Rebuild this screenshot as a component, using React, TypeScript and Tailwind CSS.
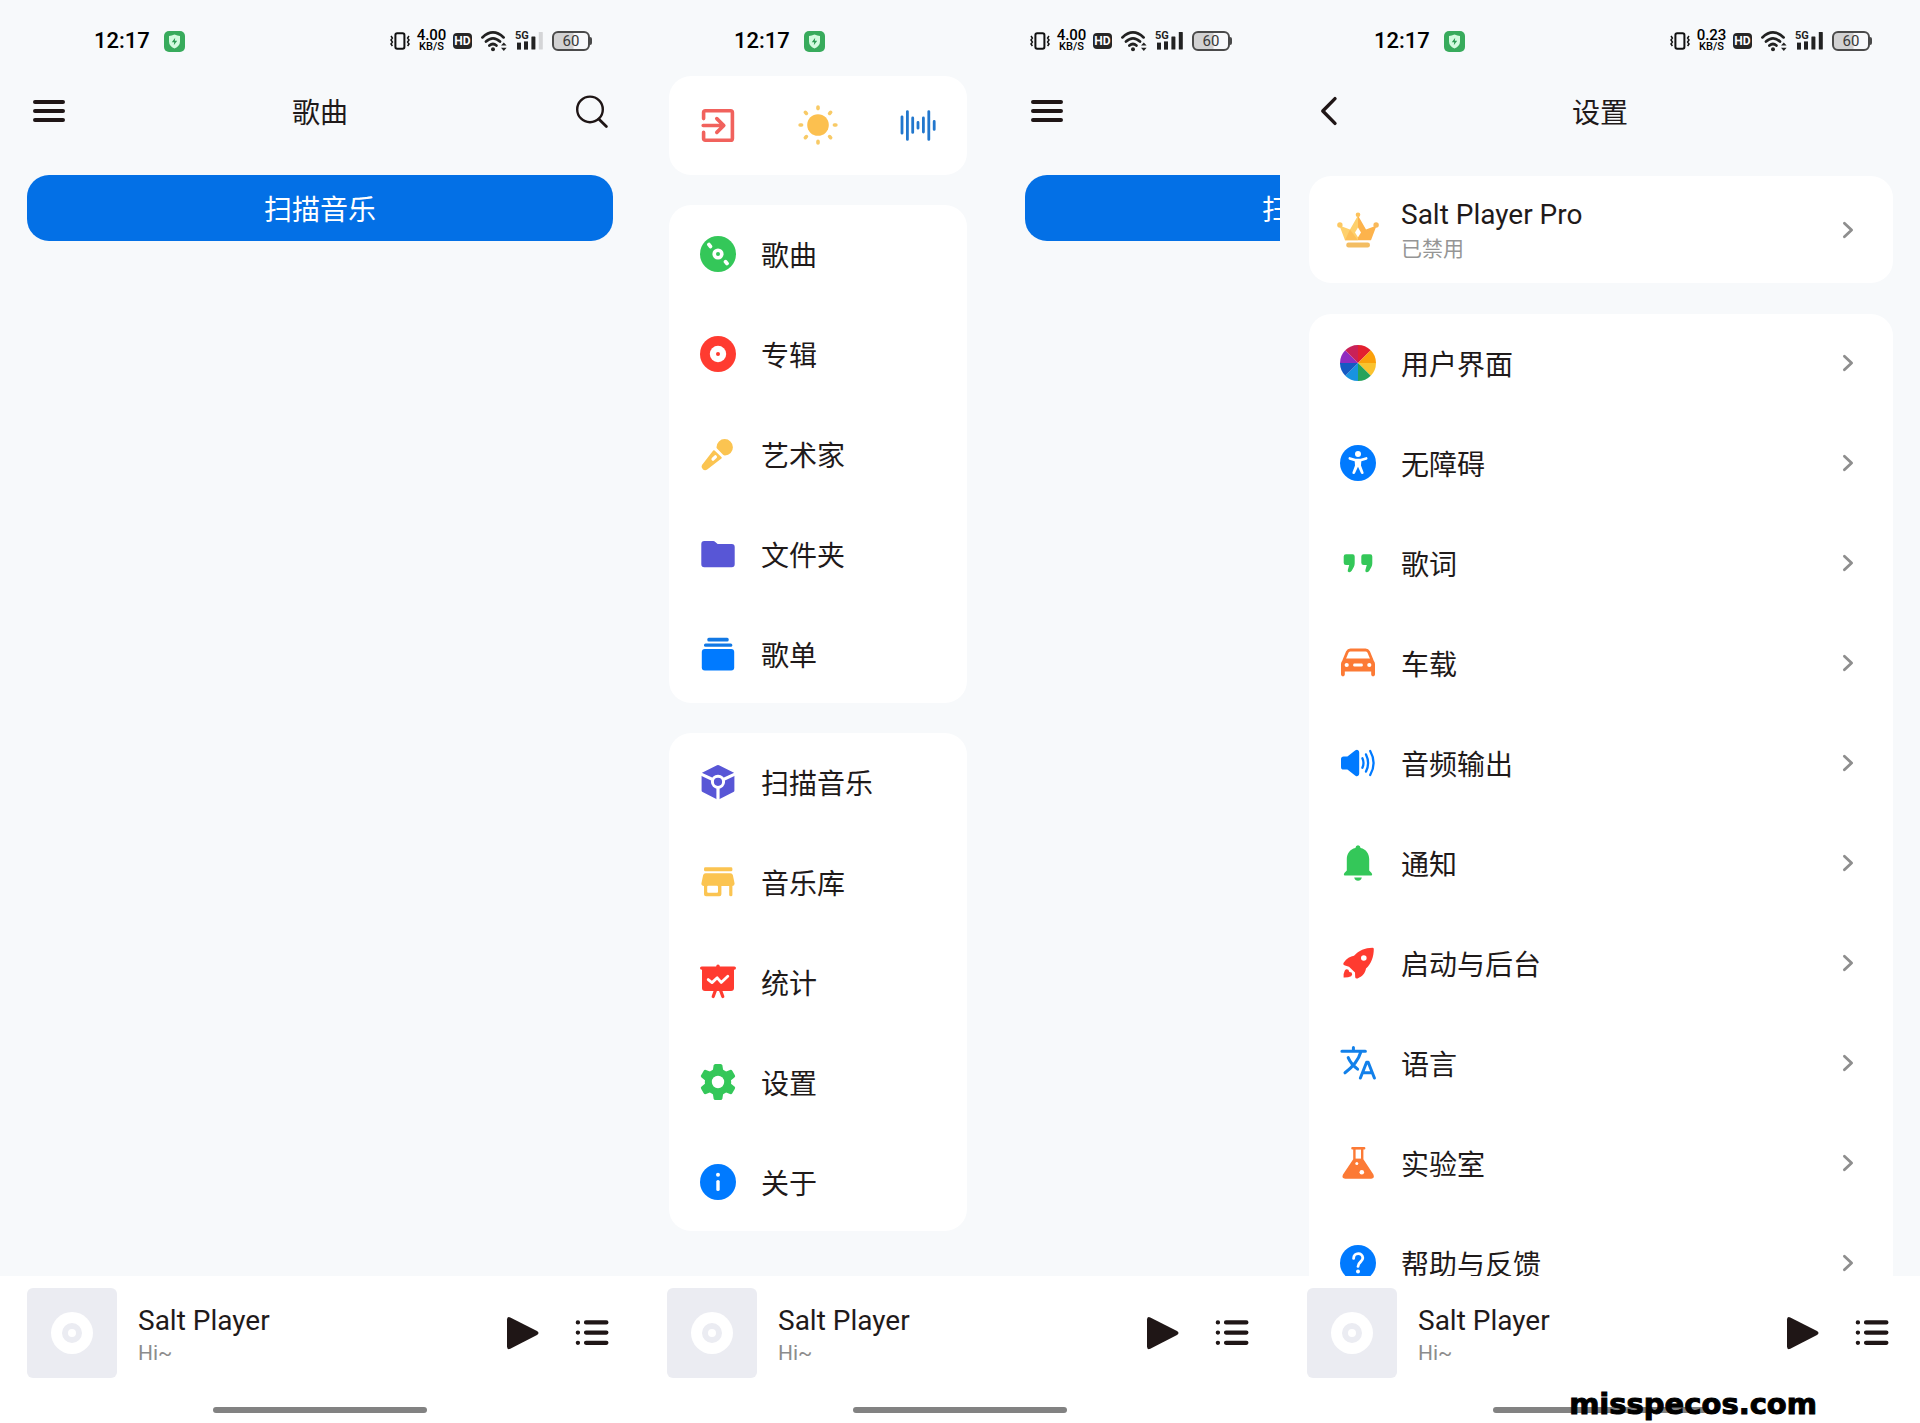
import type { ReactNode } from 'react'

const GREEN = '#34c759'
const RED = '#ff3b30'
const YELLOW = '#fbc451'
const PURPLE = '#5856d6'
const BLUE = '#007aff'
const ORANGE = '#fc7a35'
const INK = '#1f1616'

interface IconProps {
  children: ReactNode
}

function Icon({ children }: IconProps) {
  return (
    <svg viewBox="0 0 36 36" className="w-9 h-9 shrink-0" fill="none" strokeLinecap="round" strokeLinejoin="round" aria-hidden="true">
      {children}
    </svg>
  )
}

const SongIcon = () => (
  <Icon>
    <circle cx="18" cy="18" r="18" fill={GREEN} />
    <circle cx="18" cy="18" r="5.6" fill="#fff" />
    <circle cx="18" cy="18" r="2" fill={GREEN} />
    <path d="M9 8.6 10.4 10.4M25.6 25.8 27 27.4" stroke="#fff" strokeWidth="3.8" />
  </Icon>
)

const AlbumIcon = () => (
  <Icon>
    <circle cx="18" cy="18" r="18" fill={RED} />
    <circle cx="18" cy="18" r="8.2" fill="#fff" />
    <circle cx="18" cy="18" r="2" fill={RED} />
  </Icon>
)

const ArtistIcon = () => (
  <Icon>
    <path d="M16.5 11.2A8.2 8.2 0 1 1 25 19.5Q23.8 19.4 23.1 18.7L17.2 12.8Q16.4 12 16.5 11.2Z" fill={YELLOW} />
    <path d="M14.6 14.4 21.6 21.2Q22.2 22 21.4 22.6L7.2 33.6Q4.8 35.2 2.8 33.3 .6 31.2 2 29L13.2 14.6Q13.8 13.9 14.6 14.4Z" fill={YELLOW} />
    <path d="M13 23.2 15.4 20.8" stroke="#fff" strokeWidth="3.2" />
  </Icon>
)

const FolderIcon = () => (
  <Icon>
    <path d="M4.3 5H13.2Q14.4 5 15.3 5.9L17.6 8H31.7Q34.7 8 34.7 11V28.3Q34.7 31.3 31.7 31.3H4.3Q1.3 31.3 1.3 28.3V8Q1.3 5 4.3 5Z" fill={PURPLE} />
  </Icon>
)

const PlaylistIcon = () => (
  <Icon>
    <rect x="7.3" y="1.7" width="21.4" height="3.8" rx="1.5" fill="#1278e4" />
    <rect x="4" y="7.5" width="28.3" height="3.3" rx="1.5" fill="#1278e4" />
    <rect x="1.8" y="13" width="32.4" height="21.4" rx="3" fill={BLUE} />
  </Icon>
)

const ScanIcon = () => (
  <Icon>
    <path d="M17 1.3Q18 .8 19 1.3L33.5 8.6Q34.4 9.1 34.4 10V26.4Q34.4 27.6 33.4 28.1L19.2 35.2Q18 35.7 16.8 35.2L2.6 28.1Q1.6 27.6 1.6 26.4V10Q1.6 9.1 2.5 8.6Z" fill={PURPLE} />
    <path d="M0 9.6 18 18 36 9.6M18 18V37" stroke="#fff" strokeWidth="3.2" />
    <circle cx="18" cy="17.8" r="5.6" fill={PURPLE} stroke="#fff" strokeWidth="3" />
  </Icon>
)

const LibraryIcon = () => (
  <Icon>
    <rect x="4" y="3.3" width="28.4" height="4" rx="1.4" fill={YELLOW} />
    <path d="M5.6 9.3H30.4Q32.4 9.3 32.9 11.2L34.6 19.6Q34.7 21.8 32.4 22V30.9Q32.4 32.3 30.9 32.3 29.2 32.3 29.2 30.9V22H21.4V30.3Q21.4 32.3 19.4 32.3H6Q4 32.3 4 30.3V22Q1.3 21.8 1.4 19.6L3.1 11.2Q3.6 9.3 5.6 9.3Z" fill={YELLOW} />
    <rect x="7.2" y="21.8" width="10.8" height="7" rx="1" fill="#fff" />
  </Icon>
)

const StatsIcon = () => (
  <Icon>
    <rect x="0" y="2.4" width="36" height="3.4" rx="1.7" fill={RED} />
    <circle cx="18" cy="2.4" r="1.8" fill={RED} />
    <path d="M2 4H34V24Q34 27 31 27H5Q2 27 2 24Z" fill={RED} />
    <path d="M15.4 26.5 13.2 32.5M20.6 26.5 22.8 32.5" stroke={RED} strokeWidth="3.2" />
    <path d="M8.2 15.6 12 18.6 17.2 13.8 21.2 18.4 27.8 12.2" stroke="#fff" strokeWidth="2.8" />
  </Icon>
)

const TOOTH = 'M13.6 1.6Q13.9 0 15.4 0H20.6Q22.1 0 22.4 1.6L23.6 9H12.4Z'

const GearIcon = () => (
  <Icon>
    <circle cx="18" cy="18" r="13.2" fill={GREEN} />
    {[0, 60, 120, 180, 240, 300].map((deg) => (
      <path key={deg} d={TOOTH} fill={GREEN} transform={`rotate(${deg} 18 18)`} />
    ))}
    <circle cx="18" cy="18" r="6.2" fill="#fff" />
  </Icon>
)

const AboutIcon = () => (
  <Icon>
    <circle cx="18" cy="18" r="18" fill={BLUE} />
    <circle cx="18" cy="10.8" r="2" fill="#fff" />
    <path d="M18 17.6V25.4" stroke="#fff" strokeWidth="3.4" />
  </Icon>
)

const SLICES = ['#e3202f', '#fba00a', '#fac32f', '#27a35b', '#1893e0', '#1559c2', '#8f2cc0', '#c92158']

const PaletteIcon = () => (
  <Icon>
    {SLICES.map((color, i) => (
      <path key={color} d="M18 18V0A18 18 0 0 1 30.73 5.27Z" fill={color} transform={`rotate(${i * 45} 18 18)`} />
    ))}
  </Icon>
)

const AccessIcon = () => (
  <Icon>
    <circle cx="18" cy="18" r="18" fill={BLUE} />
    <circle cx="18" cy="9" r="3" fill="#fff" />
    <path d="M9.8 13.4 15 15H21L26.2 13.4" stroke="#fff" strokeWidth="2.6" />
    <path d="M14.6 14.6H21.4L21 20.6 23.6 27.4Q23.7 28.9 22.4 28.9 21.3 29 20.9 28L18 21.8 15.1 28Q14.7 29 13.6 28.9 12.3 28.9 12.4 27.4L15 20.6Z" fill="#fff" />
  </Icon>
)

const QUOTE = 'M6 9.3H12.6Q14.7 9.3 14.7 11.4V18.2Q14.7 20.2 13.8 22L11.7 25.8Q10.8 27.4 9 27.2 7.2 26.8 7.8 25L9.2 20H6Q3.7 20 3.7 17.8V11.6Q3.7 9.3 6 9.3Z'

const LyricsIcon = () => (
  <Icon>
    <path d={QUOTE} fill={GREEN} />
    <path d={QUOTE} fill={GREEN} transform="translate(17.6 0)" />
  </Icon>
)

const CarIcon = () => (
  <Icon>
    <path d="M4 15 7.4 6.8Q8.3 5 10.4 5H25.6Q27.7 5 28.6 6.8L32 15" stroke={ORANGE} strokeWidth="2.8" />
    <path d="M4.4 13.4H31.6L33.6 15.6Q35 17.2 35 19V29.6Q35 31.4 33 31.4 31.2 31.4 31.2 29.6V26.6H4.8V29.6Q4.8 31.4 3 31.4 1 31.4 1 29.6V19Q1 17.2 2.4 15.6Z" fill={ORANGE} />
    <circle cx="6.7" cy="20" r="2.1" fill="#fff" />
    <circle cx="29.3" cy="20" r="2.1" fill="#fff" />
    <rect x="13.2" y="18.6" width="9.6" height="2.8" rx="1.2" fill="#fff" />
  </Icon>
)

const AudioIcon = () => (
  <Icon>
    <path d="M3.6 11.4H7.4L15.4 5.3Q17 4.2 18.2 5.2 19.2 6 19.2 7.4V28.6Q19.2 30 18.2 30.8 17 31.8 15.4 30.7L7.4 24.6H3.6Q1 24.6 1 22V14Q1 11.4 3.6 11.4Z" fill={BLUE} />
    <path d="M22.4 13.2Q24.6 18 22.4 22.8M26 9.4Q30.2 18 26 26.6M30.2 6Q37 18 30.2 30" stroke={BLUE} strokeWidth="2.3" />
  </Icon>
)

const BellIcon = () => (
  <Icon>
    <path d="M18 .3Q20.2 .3 20.6 2.9C26 4.2 29.2 8.4 29.2 14V25.4L31.6 27.9Q32.8 29.4 31.6 30.6H4.4Q3.2 29.4 4.4 27.9L6.8 25.4V14C6.8 8.4 10 4.2 15.4 2.9Q15.8 .3 18 .3Z" fill={GREEN} />
    <path d="M14.2 32.6H21.8Q21 35.8 18 35.8 15 35.8 14.2 32.6Z" fill={GREEN} />
  </Icon>
)

const RocketIcon = () => (
  <Icon>
    <path d="M33.8 4Q33.8 2.7 32.4 2.7C25 2.8 18.8 5.3 14 10.8 10.4 11.2 6.6 13.6 3.8 17.6 2.8 19.2 3.4 20 5 20.6L9 21.8 15 27.4 15.2 32.2Q15.6 34 17.6 33.4C22.4 31.8 25.2 28.4 26 23.6 31.4 18.6 33.8 11.6 33.8 4Z" fill={RED} />
    <circle cx="23.8" cy="13" r="2.8" fill="#fff" />
    <path d="M4.8 25.4Q6.4 23.2 8.4 24.8L9.4 27 11.6 27.6Q13 29.6 11.2 31.2 8 32.8 3.6 32.6 3.2 28.4 4.8 25.4Z" fill={RED} />
  </Icon>
)

const LanguageIcon = () => (
  <Icon>
    <path d="M1.9 6.3H25.4M13.4 2.6V6M20.8 7C18.6 14.6 12.6 22 5 27.8M8.2 12.6C10 17 13.6 21 17.6 24.2" stroke="#1280ea" strokeWidth="3" />
    <path d="M20.4 33 26.6 17.2H28.2L34.4 33M22.4 27.8H32.4" stroke="#1280ea" strokeWidth="3" />
  </Icon>
)

const LabIcon = () => (
  <Icon>
    <path d="M12.4 2H24.2Q25.4 2 25.4 3.2 25.4 4.4 24.2 4.4H23.4V14.2L33.4 29.6Q35 33.6 31.2 33.8H5.2Q1.2 33.6 3 29.6L13.2 14.2V4.4H12.4Q11.2 4.4 11.2 3.2 11.2 2 12.4 2Z" fill={ORANGE} />
    <rect x="15.6" y="4.6" width="5.4" height="9" fill="#fff" />
    <circle cx="16.8" cy="18.4" r="1.5" fill="#fff" />
    <circle cx="21.8" cy="27.2" r="2.3" fill="#fff" />
  </Icon>
)

const HelpIcon = () => (
  <Icon>
    <circle cx="18" cy="18" r="18" fill={BLUE} />
    <path d="M13.6 13.4C13.6 7.2 22.8 7.2 22.8 13 22.8 16.8 18 17 18 21.4" stroke="#fff" strokeWidth="2.8" />
    <circle cx="18" cy="26.6" r="2" fill="#fff" />
  </Icon>
)

const ExitIcon = () => (
  <Icon>
    <path d="M3.6 11.6V5.6Q3.6 3.8 5.4 3.8H30.6Q32.4 3.8 32.4 5.6V31.4Q32.4 33.2 30.6 33.2H5.4Q3.6 33.2 3.6 31.4V25.4" stroke="#f1625d" strokeWidth="3.6" />
    <path d="M3.2 18.5H23.6M16.8 11.6 23.8 18.5 16.8 25.4" stroke="#f1625d" strokeWidth="3.6" />
  </Icon>
)

const SunIcon = () => (
  <svg viewBox="-20 -20 40 40" className="w-10 h-10" strokeLinecap="round" aria-hidden="true">
    <circle r="10.8" fill="#fcc04f" />
    {[0, 45, 90, 135, 180, 225, 270, 315].map((deg) => (
      <path key={deg} d="M0 -17.9V-16.4" stroke="#f8ca66" strokeWidth="3.6" transform={`rotate(${deg})`} />
    ))}
  </svg>
)

const WaveIcon = () => (
  <Icon>
    <path
      d="M2 9.8V26.2M7.4 4.6V32.4M12.7 11V25.4M18 15.4V21.2M23.4 11V25M28.8 4.6V32.4M34.2 14.4V22.4"
      stroke="#2277cd"
      strokeWidth="2.8"
    />
  </Icon>
)

const MenuIcon = () => (
  <Icon>
    <path d="M4 9H32M4 18H32M4 27H32" stroke={INK} strokeWidth="4" />
  </Icon>
)

const SearchIcon = () => (
  <Icon>
    <circle cx="17" cy="16.4" r="12.8" stroke={INK} strokeWidth="2.4" />
    <path d="M26 26.2 33.4 33.6" stroke={INK} strokeWidth="2.8" />
  </Icon>
)

const BackIcon = () => (
  <Icon>
    <path d="M24 5.6 11.8 18 24 30.4" stroke={INK} strokeWidth="3.4" />
  </Icon>
)

const PlayIcon = () => (
  <Icon>
    <path d="M3 4.6Q3 .9 6.3 2.4L33 16Q36 18 33 20L6.3 33.8Q3 35.2 3 31.6Z" fill={INK} />
  </Icon>
)

const QueueIcon = () => (
  <Icon>
    <path d="M12 7.4H32.4M12 17.6H32.4M12 27.8H32.4M3.8 7.4H4M3.8 17.6H4M3.8 27.8H4" stroke={INK} strokeWidth="4.2" />
  </Icon>
)

const Chevron = () => (
  <svg viewBox="0 0 12 18" className="w-3 h-[18px] shrink-0" fill="none" strokeLinecap="round" strokeLinejoin="round" aria-hidden="true">
    <path d="M2.4 2.2 9.6 9 2.4 15.8" stroke="#8e8e8e" strokeWidth="2.8" />
  </svg>
)

const CrownIcon = () => (
  <span className="w-9 flex justify-center shrink-0">
    <svg viewBox="0 0 42 36" className="w-[42px] h-9 shrink-0" aria-hidden="true">
      <path d="M2.4 13.6 13 17.6 21 3.4V28.2H8Z" fill="#fed06c" />
      <path d="M39.6 13.6 29 17.6 21 3.4V28.2H34Z" fill="#fdb34c" />
      <path d="M13 17.6 21 28.2H8Z" fill="#fdbf58" />
      <circle cx="21" cy="2.8" r="2.3" fill="#fdc25a" />
      <circle cx="2.9" cy="13" r="2.7" fill="#fdc861" />
      <circle cx="39.1" cy="13" r="2.7" fill="#f9b95a" />
      <path d="M21 15.4 24 20.4 21 25.2 18 20.4Z" fill="#fff" />
      <rect x="9.3" y="30.4" width="23.6" height="5" rx="2.2" fill="#f3bd62" />
    </svg>
  </span>
)

interface StatusBarProps {
  speed: string
  weakSignal?: boolean
}

function StatusBar({ speed, weakSignal = false }: StatusBarProps) {
  return (
    <div className="h-[76px] pt-1.5 pl-[94px] pr-12 flex items-center justify-between shrink-0 text-black">
      <div className="flex items-center gap-3.5">
        <span className="text-[22px] leading-7 font-medium">12:17</span>
        <svg viewBox="0 0 21 21" className="w-[21px] h-[21px]" aria-hidden="true">
          <rect width="21" height="21" rx="5" fill="#38ab5c" />
          <path d="M10.5 3.6Q13.4 4.8 16 5V10.4Q16 15 10.5 17.6 5 15 5 10.4V5Q7.6 4.8 10.5 3.6Z" fill="#d4fbe0" />
          <path d="M11.2 6.8 7.8 11.2H10.2L9.8 14.2 13.2 9.8H10.8Z" fill="#2a9a50" />
        </svg>
      </div>
      <div className="flex items-center gap-1.5">
        <svg viewBox="0 0 20 18" className="w-5 h-[18px]" fill="none" stroke="#111" aria-hidden="true">
          <rect x="5.4" y="1.2" width="9" height="15.6" rx="1.8" strokeWidth="2" />
          <path d="M1 4 2.4 6 1 8 2.4 10 1 12 2.4 14M19 4 17.6 6 19 8 17.6 10 19 12 17.6 14" strokeWidth="1.5" />
        </svg>
        <div className="w-[31px] flex flex-col items-center font-medium leading-3">
          <span className="text-[15px]">{speed}</span>
          <span className="text-[11px]">KB/S</span>
        </div>
        <span className="w-[19px] h-4 rounded bg-[#262626] text-white text-[12px] leading-4 font-bold text-center">HD</span>
        <svg viewBox="0 0 31 22" className="w-[31px] h-[22px]" fill="none" stroke="#222" strokeLinecap="round" aria-hidden="true">
          <path d="M4.4 7.4Q15 -2.6 25.6 7.4M8 11.6Q15 5 22 11.6M11.4 15.6Q15 12.4 18.4 15.6" strokeWidth="2.7" />
          <circle cx="15" cy="19.2" r="2" fill="#222" stroke="none" />
          <path d="M23 15.6 25.8 12.4 28.6 15.6ZM23 17.8 25.8 21 28.6 17.8Z" fill="#222" stroke="none" />
        </svg>
        <svg viewBox="0 0 31 20" className="w-[31px] h-5 overflow-visible" fill="#222" aria-hidden="true">
          <text x="0" y="8" fontSize="11" fontWeight="700">5G</text>
          <rect x="2" y="11.6" width="4" height="7" />
          <rect x="9" y="10.4" width="4" height="8.2" />
          <rect x="16.4" y="5.4" width="4" height="13.2" rx=".6" />
          <rect x="23.8" y="1" width="4" height="17.6" rx=".6" fill={weakSignal ? '#d4d5d7' : '#222'} />
        </svg>
        <div className="flex items-center">
          <span className="w-[38px] h-5 rounded-md border-2 border-[#4a4a4a] bg-linear-to-r from-[#d2d2d3] from-55% to-[#f8f9fb] to-60% text-[15px] leading-4 text-center text-[#3a3a3a]">60</span>
          <span className="w-0.5 h-2 rounded-r bg-[#4a4a4a]" />
        </div>
      </div>
    </div>
  )
}

interface PageHeaderProps {
  title: string
  left: ReactNode
  right?: ReactNode
}

function PageHeader({ title, left, right }: PageHeaderProps) {
  return (
    <header className="h-[70px] px-[31px] flex items-center justify-between shrink-0">
      {left}
      <h1 className="pt-1.5 text-[28px] leading-9">{title}</h1>
      {right ?? <span className="w-9" />}
    </header>
  )
}

function SongsPage() {
  return (
    <div className="w-full shrink-0">
      <PageHeader
        title="歌曲"
        left={<button aria-label="菜单"><MenuIcon /></button>}
        right={<button aria-label="搜索"><SearchIcon /></button>}
      />
      <div className="px-[27px] pt-[29px]">
        <button className="w-full h-[66px] pt-1.5 rounded-[22px] bg-[#0370e6] text-white text-[28px] leading-9">扫描音乐</button>
      </div>
    </div>
  )
}

interface Item {
  label: string
  icon: ReactNode
}

const BROWSE: Item[] = [
  { label: '歌曲', icon: <SongIcon /> },
  { label: '专辑', icon: <AlbumIcon /> },
  { label: '艺术家', icon: <ArtistIcon /> },
  { label: '文件夹', icon: <FolderIcon /> },
  { label: '歌单', icon: <PlaylistIcon /> },
]

const TOOLS: Item[] = [
  { label: '扫描音乐', icon: <ScanIcon /> },
  { label: '音乐库', icon: <LibraryIcon /> },
  { label: '统计', icon: <StatsIcon /> },
  { label: '设置', icon: <GearIcon /> },
  { label: '关于', icon: <AboutIcon /> },
]

const SETTINGS: Item[] = [
  { label: '用户界面', icon: <PaletteIcon /> },
  { label: '无障碍', icon: <AccessIcon /> },
  { label: '歌词', icon: <LyricsIcon /> },
  { label: '车载', icon: <CarIcon /> },
  { label: '音频输出', icon: <AudioIcon /> },
  { label: '通知', icon: <BellIcon /> },
  { label: '启动与后台', icon: <RocketIcon /> },
  { label: '语言', icon: <LanguageIcon /> },
  { label: '实验室', icon: <LabIcon /> },
  { label: '帮助与反馈', icon: <HelpIcon /> },
]

function ItemList({ items, chevron = false }: { items: Item[]; chevron?: boolean }) {
  return (
    <ul className="flex flex-col gap-0.5 rounded-[22px] bg-white">
      {items.map((item) => (
        <li key={item.label}>
          <a href="#" className="h-[98px] pl-[31px] pr-[39px] flex items-center gap-[25px]">
            {item.icon}
            <span className="flex-1 pt-1.5 text-[28px] leading-9">{item.label}</span>
            {chevron && <Chevron />}
          </a>
        </li>
      ))}
    </ul>
  )
}

function Drawer() {
  return (
    <nav className="w-[358px] pl-[29px] pr-[31px] shrink-0 flex flex-col gap-[30px]">
      <div className="h-[99px] px-[31px] pb-0.5 rounded-[22px] bg-white flex items-center justify-between">
        <button aria-label="退出"><ExitIcon /></button>
        <button aria-label="主题"><SunIcon /></button>
        <button aria-label="音效"><WaveIcon /></button>
      </div>
      <ItemList items={BROWSE} />
      <ItemList items={TOOLS} />
    </nav>
  )
}

function SettingsPage() {
  return (
    <div className="w-full shrink-0">
      <PageHeader title="设置" left={<button aria-label="返回"><BackIcon /></button>} />
      <div className="pl-[29px] pr-[27px] pt-[30px] flex flex-col gap-[31px]">
        <a href="#" className="h-[107px] pl-[31px] pr-[39px] rounded-[22px] bg-white flex items-center gap-[25px]">
          <CrownIcon />
          <span className="flex-1 pt-0.5 flex flex-col">
            <span className="text-[28px] leading-9">Salt Player Pro</span>
            <span className="text-[21px] leading-8 text-[#959595]">已禁用</span>
          </span>
          <Chevron />
        </a>
        <ItemList items={SETTINGS} chevron />
      </div>
    </div>
  )
}

function MiniPlayer() {
  return (
    <footer className="h-[147px] shrink-0 bg-white px-[27px] pt-3 pb-2.5 flex flex-col justify-between items-center">
      <div className="w-full flex items-center">
        <div className="w-[90px] h-[90px] rounded-md bg-[#ebecf2] flex items-center justify-center">
          <svg viewBox="0 0 42 42" className="w-[42px] h-[42px]" aria-hidden="true">
            <circle cx="21" cy="21" r="21" fill="#fff" />
            <circle cx="21" cy="21" r="7" fill="none" stroke="#ebecf2" strokeWidth="6" />
          </svg>
        </div>
        <div className="flex-1 pl-[21px] pt-1 flex flex-col">
          <span className="text-[28px] leading-9">Salt Player</span>
          <span className="text-[21px] leading-7 text-[#8c8c8c]">Hi~</span>
        </div>
        <div className="flex gap-[34px] pr-[3px]">
          <button aria-label="播放"><PlayIcon /></button>
          <button aria-label="播放列表"><QueueIcon /></button>
        </div>
      </div>
      <div className="w-[214px] h-1.5 rounded-full bg-[#828282]" />
    </footer>
  )
}

interface PhoneProps extends StatusBarProps {
  children: ReactNode
}

function Phone({ children, ...status }: PhoneProps) {
  return (
    <section className="h-screen min-w-0 flex flex-col overflow-hidden">
      <StatusBar {...status} />
      <div className="flex-1 min-h-0 flex overflow-hidden">{children}</div>
      <MiniPlayer />
    </section>
  )
}

export default function App() {
  return (
    <main className="relative grid grid-cols-3 bg-[#f7f9fb] text-[#1f1a1a] font-['Roboto','Noto_Sans_CJK_SC',sans-serif]">
      <Phone speed="4.00" weakSignal>
        <SongsPage />
      </Phone>
      <Phone speed="4.00">
        <Drawer />
        <SongsPage />
      </Phone>
      <Phone speed="0.23">
        <SettingsPage />
      </Phone>
      <span className="absolute right-[103px] bottom-0 text-[29px] leading-[38px] font-bold text-black font-['DejaVu_Sans',sans-serif] [-webkit-text-stroke:1px_#000]">
        misspecos.com
      </span>
    </main>
  )
}
